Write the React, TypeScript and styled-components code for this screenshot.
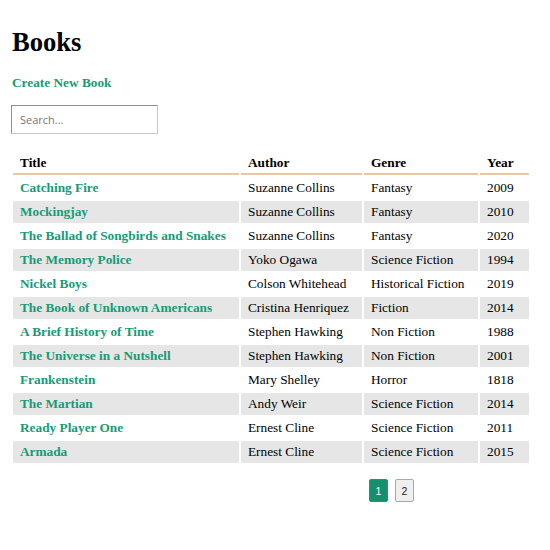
import React from "react";
import styled, { createGlobalStyle } from "styled-components";

const Global = createGlobalStyle`
  html, body { margin: 0; padding: 0; background: #fff; }
  body { font-family: "Liberation Serif", "Times New Roman", serif; color: #000; }
`;

const Page = styled.div`
  padding: 0 11px;
  font-size: 13.3px;
`;

const Title = styled.h1`
  margin: 0;
  padding: 27px 0 0 1px;
  font-size: 26.6px;
  line-height: 30px;
  font-weight: bold;
`;

const CreateLink = styled.a`
  display: block;
  margin-top: 18px;
  padding-left: 1px;
  color: #169b77;
  font-weight: bold;
  font-size: 13.3px;
  text-decoration: none;
  line-height: 16px;
`;

const Search = styled.input`
  display: block;
  margin-top: 14px;
  width: 147px;
  height: 29px;
  box-sizing: border-box;
  border: 1px solid #c9c9c9;
  border-top-color: #8f8f8f;
  border-left-color: #8f8f8f;
  padding: 0 8px;
  font-family: "Open Sans", "Liberation Sans", sans-serif;
  font-size: 11px;
  color: #333;
  outline: none;
  &::placeholder { color: #777; }
`;

const Table = styled.table`
  margin-top: 15px;
  border-collapse: separate;
  border-spacing: 2px;
  width: 520px;
  table-layout: fixed;
  font-size: 13.3px;
`;

const Th = styled.th<{ $w: number }>`
  width: ${(p) => p.$w}px;
  box-sizing: border-box;
  text-align: left;
  font-weight: bold;
  padding: 4px 7px 2px;
  line-height: 16px;
  border-bottom: 2px solid #e9c6a4;
`;

const Row = styled.tr<{ $striped: boolean }>`
  background: ${(p) => (p.$striped ? "#e6e6e6" : "transparent")};
`;

const Td = styled.td`
  padding: 3px 7px;
  height: 16px;
  line-height: 16px;
  white-space: nowrap;
  overflow: hidden;
`;

const BookLink = styled.a`
  color: #169b77;
  font-weight: bold;
  text-decoration: none;
`;

const Pager = styled.div`
  display: flex;
  gap: 7px;
  margin-top: 14px;
  padding-left: 358px;
`;

const PageBtn = styled.button<{ $active: boolean }>`
  width: 19px;
  height: 23px;
  padding: 0;
  box-sizing: border-box;
  border: 1px solid ${(p) => (p.$active ? "#169b77" : "#a8a8a8")};
  border-radius: 2px;
  background: ${(p) => (p.$active ? "#168f6c" : "#efefef")};
  color: ${(p) => (p.$active ? "#fff" : "#222")};
  font-family: "Liberation Sans", Arial, sans-serif;
  font-size: 10.5px;
`;

const books = [
  ["Catching Fire", "Suzanne Collins", "Fantasy", "2009"],
  ["Mockingjay", "Suzanne Collins", "Fantasy", "2010"],
  ["The Ballad of Songbirds and Snakes", "Suzanne Collins", "Fantasy", "2020"],
  ["The Memory Police", "Yoko Ogawa", "Science Fiction", "1994"],
  ["Nickel Boys", "Colson Whitehead", "Historical Fiction", "2019"],
  ["The Book of Unknown Americans", "Cristina Henriquez", "Fiction", "2014"],
  ["A Brief History of Time", "Stephen Hawking", "Non Fiction", "1988"],
  ["The Universe in a Nutshell", "Stephen Hawking", "Non Fiction", "2001"],
  ["Frankenstein", "Mary Shelley", "Horror", "1818"],
  ["The Martian", "Andy Weir", "Science Fiction", "2014"],
  ["Ready Player One", "Ernest Cline", "Science Fiction", "2011"],
  ["Armada", "Ernest Cline", "Science Fiction", "2015"],
];

export default function App() {
  return (
    <>
      <Global />
      <Page>
        <Title>Books</Title>
        <CreateLink href="#">Create New Book</CreateLink>
        <Search placeholder="Search..." />
        <Table>
          <thead>
            <tr>
              <Th $w={226}>Title</Th>
              <Th $w={121}>Author</Th>
              <Th $w={114}>Genre</Th>
              <Th $w={49}>Year</Th>
            </tr>
          </thead>
          <tbody>
            {books.map((b, i) => (
              <Row key={b[0]} $striped={i % 2 === 1}>
                <Td>
                  <BookLink href="#">{b[0]}</BookLink>
                </Td>
                <Td>{b[1]}</Td>
                <Td>{b[2]}</Td>
                <Td>{b[3]}</Td>
              </Row>
            ))}
          </tbody>
        </Table>
        <Pager>
          <PageBtn $active>1</PageBtn>
          <PageBtn $active={false}>2</PageBtn>
        </Pager>
      </Page>
    </>
  );
}
